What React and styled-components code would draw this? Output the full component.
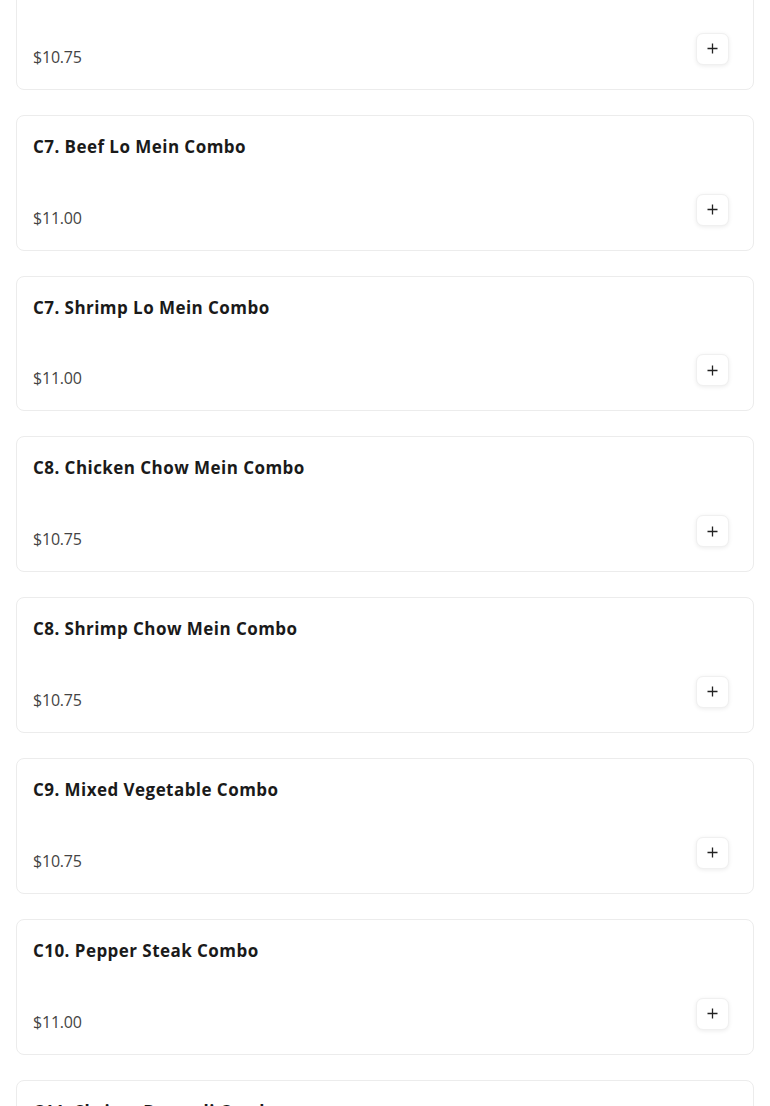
import styled, { createGlobalStyle } from "styled-components";

const items = [
  { name: "C6. Chicken Lo Mein Combo", price: "$10.75" },
  { name: "C7. Beef Lo Mein Combo", price: "$11.00" },
  { name: "C7. Shrimp Lo Mein Combo", price: "$11.00" },
  { name: "C8. Chicken Chow Mein Combo", price: "$10.75" },
  { name: "C8. Shrimp Chow Mein Combo", price: "$10.75" },
  { name: "C9. Mixed Vegetable Combo", price: "$10.75" },
  { name: "C10. Pepper Steak Combo", price: "$11.00" },
  { name: "C11. Shrimp Broccoli Combo", price: "$11.00" },
];

const PlusIcon = () => (
  <svg width="11" height="11" viewBox="0 0 11 11" fill="none">
    <path d="M5.5 0.5v10M0.5 5.5h10" stroke="#222" strokeWidth="1.3" />
  </svg>
);

const App = () => (
  <>
    <GlobalStyle />
    <Page>
      <List>
        {items.map((item, i) => (
          <Card key={i}>
            <Title>{item.name}</Title>
            <Bottom>
              <Price>{item.price}</Price>
              <AddButton aria-label="Add">
                <PlusIcon />
              </AddButton>
            </Bottom>
          </Card>
        ))}
      </List>
    </Page>
  </>
);

export default App;

const GlobalStyle = createGlobalStyle`
  html, body {
    margin: 0;
    background: #fff;
    overflow: hidden;
  }
  body {
    font-family: "Open Sans", "Liberation Sans", sans-serif;
    color: #1c1c1c;
  }
`;

const Page = styled.div`
  height: 1106px;
  overflow: hidden;
  padding: 0 16px;
`;

const List = styled.div`
  display: flex;
  flex-direction: column;
  gap: 25px;
  margin-top: -46px;
`;

const Card = styled.div`
  height: 135.8px;
  flex-shrink: 0;
  box-sizing: border-box;
  border: 1px solid #ececec;
  border-radius: 8px;
  padding: 16px 24px 20px 16px;
  display: flex;
  flex-direction: column;
  justify-content: space-between;
  background: #fff;
`;

const Title = styled.div`
  font-size: 17px;
  font-weight: 700;
  line-height: 30px;
  color: #1a1a1a;
  letter-spacing: 0.45px;
`;

const Bottom = styled.div`
  display: flex;
  align-items: flex-end;
  justify-content: space-between;
`;

const Price = styled.div`
  font-size: 16px;
  line-height: 24px;
  color: #444;
  letter-spacing: -0.2px;
`;

const AddButton = styled.button`
  width: 33px;
  height: 32px;
  margin-bottom: 4px;
  border: 1px solid #f0f0f0;
  border-radius: 7px;
  background: #fff;
  box-shadow: 0 1px 4px rgba(0, 0, 0, 0.08);
  display: flex;
  align-items: center;
  justify-content: center;
  padding: 0;
  cursor: pointer;
`;
